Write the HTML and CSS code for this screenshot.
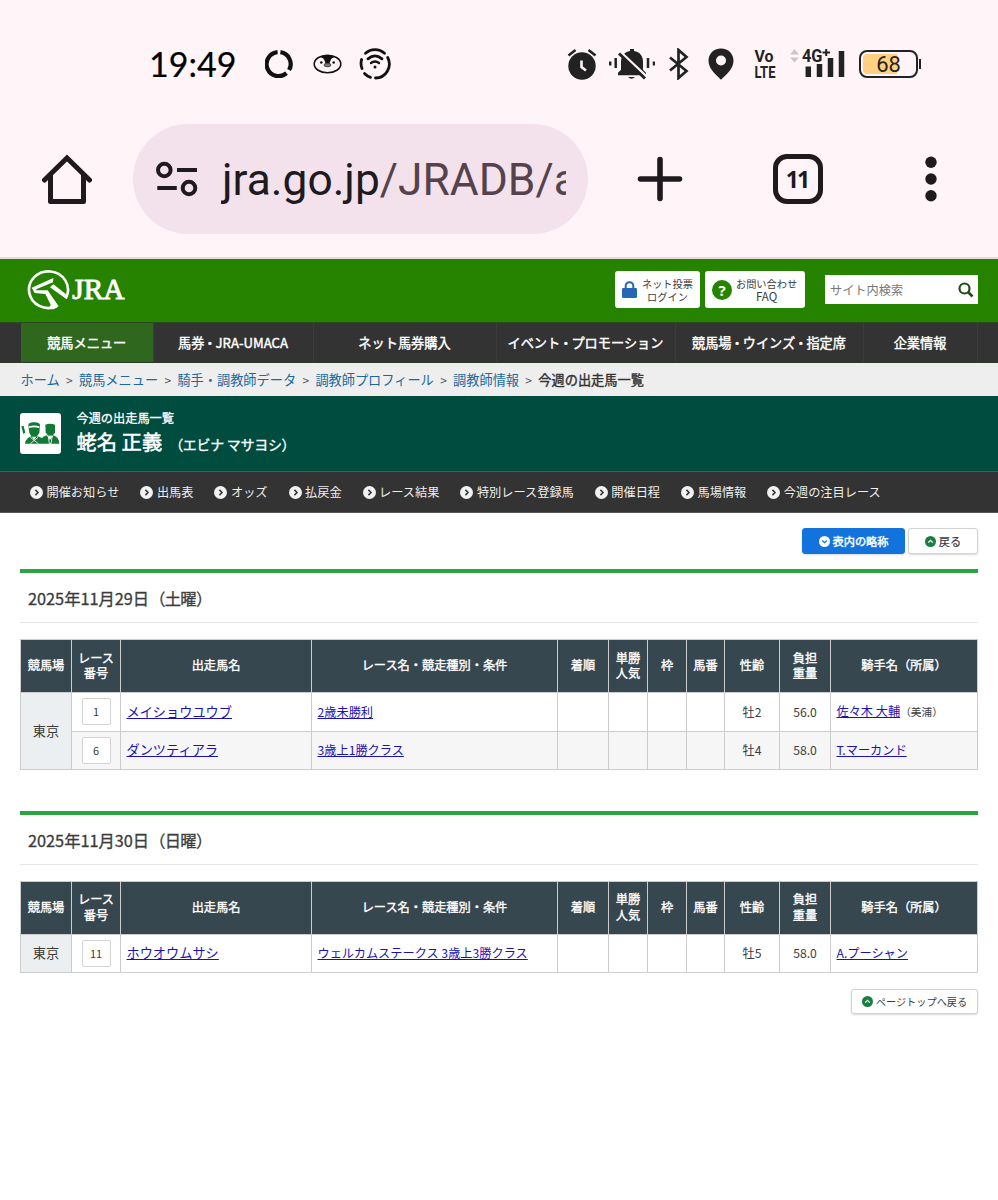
FILE: index.html
```
<!DOCTYPE html>
<html lang="ja">
<head>
    <meta charset="UTF-8">
    <meta name="viewport" content="width=device-width, initial-scale=1.0">
    <title>今週の出走馬一覧 JRA</title>
    <link rel="stylesheet" href="styles.css">
</head>
<body>
    <svg width="0" height="0" class="defs">
        <symbol id="arrow-right" viewBox="0 0 12 12"><circle cx="6" cy="6" r="6" fill="#f2f2f2"/><path d="M5 3.6 7.4 6 5 8.4" fill="none" stroke="#333" stroke-width="1.4"/></symbol>
        <symbol id="arrow-up" viewBox="0 0 12 12"><circle cx="6" cy="6" r="6" fill="#178040"/><path d="M3.5 7.2 6 4.8l2.5 2.4" fill="none" stroke="#fff" stroke-width="1.4"/></symbol>
        <symbol id="arrow-down" viewBox="0 0 12 12"><circle cx="6" cy="6" r="6" fill="#fff"/><path d="M3.5 4.9 6 7.2l2.5-2.3" fill="none" stroke="#1273dc" stroke-width="1.4"/></symbol>
    </svg>

    <div class="phone">
        <div class="status">
            <span class="time">19:49</span>
            <svg class="st-ring" width="28" height="28" viewBox="0 0 28 28"><g fill="none" stroke="#111" stroke-width="4.2"><path d="M12.6 2.2A12 12 0 1 0 21.5 23.2"/><path d="M15.4 2.2A12 12 0 0 1 24.1 20"/></g></svg>
            <svg class="st-penguin" width="29" height="20" viewBox="0 0 29 20"><ellipse cx="14.5" cy="10" rx="13.3" ry="8.8" fill="none" stroke="#111" stroke-width="1.6"/><path d="M7 3C10 .8 19 .8 22 3 18 4 17.500 6 16.500 9.500h-4C11.500 6 11 4 7 3z" fill="#111"/><circle cx="8.300" cy="8.500" r="1.300" fill="#111"/><circle cx="20.700" cy="8.500" r="1.300" fill="#111"/><ellipse cx="14.500" cy="11" rx="3.500" ry="1.800" fill="#777" stroke="#222" stroke-width=".7"/></svg>
            <svg class="st-wifi" width="32" height="32" viewBox="0 0 32 32"><g fill="none" stroke="#111" stroke-width="2.800" stroke-linecap="round"><path d="M6.500 5.300A14 14 0 0 1 25.500 5.300"/><path d="M2.600 11.500A14 14 0 0 0 3 20.500"/><path d="M5.500 25.500A14 14 0 0 0 11.500 29.300"/><path d="M28.700 9.500A14 14 0 0 1 16.500 30"/><path d="M9 10.800Q16 5 23 10.800"/><path d="M12 15Q16 12 20 15" stroke-width="2.400"/></g><circle cx="16" cy="19" r="1.500" fill="#111"/></svg>
            <div class="status-right">
                <svg width="30" height="32" viewBox="0 0 30 32"><circle cx="15" cy="18" r="13.700" fill="#222"/><path d="M1.500 7.500 8.500 2M28.500 7.500 21.500 2" stroke="#222" stroke-width="2.600"/><path d="M14.500 12.500v6.500l4.500 3.500" fill="none" stroke="#fff5f9" stroke-width="2.600"/></svg>
                <svg class="st-bell" width="46" height="32" viewBox="0 0 46 32"><path d="M9 27.300v-2.600l3-3V14c0-6 3.500-10 9-11V1h4v2c6 1 9 5 9 11v7.700l3 3v2.600z" fill="#222"/><path d="M19 29h7q-3.500 3.500-7 0z" fill="#222"/><path d="M12.500 5 37.500 28.500" stroke="#fff5f9" stroke-width="2.500"/><path d="M10 5.500 36 30.500" stroke="#222" stroke-width="3"/><path d="M1.200 13.500v4M6.700 10v10M39 10v10M45 13.500v4" stroke="#222" stroke-width="2.500"/></svg>
                <svg class="st-bt" width="20" height="32" viewBox="0 0 20 32"><path d="M1 9.500 17.500 23 9.500 30V2l8 7L1 22.500" fill="none" stroke="#222" stroke-width="2.700"/></svg>
                <svg class="st-pin" width="26" height="32" viewBox="0 0 26 32"><path d="M13 .5C5.500.5.500 6 .500 12.800.500 20 6 25 13 31.700 20 25 25.500 20 25.500 12.800 25.500 6 20.500.500 13 .500z" fill="#222"/><circle cx="13" cy="12.500" r="5" fill="#fff5f9"/></svg>
                <svg class="volte" width="22" height="36" viewBox="0 0 22 36"><text x="0.500" y="16" textLength="19" lengthAdjust="spacingAndGlyphs">Vo</text><text x="0.500" y="32" textLength="21" lengthAdjust="spacingAndGlyphs">LTE</text></svg>
                <svg class="st-signal" width="55" height="32" viewBox="0 0 55 32"><path d="M0 6.500 4.500 1 9 6.500zM0 9.500 4.500 14.500 9 9.500z" fill="#ccc5c9"/><path d="M18.300 18.500v10.500M29.500 16v13M40.500 10v19M51.500 3v26" stroke="#222" stroke-width="5.500"/><text x="12" y="14" textLength="20.500" lengthAdjust="spacingAndGlyphs" class="sig-text">4G</text><path d="M32.500 4.500h7.500M36.200 1v7" stroke="#222" stroke-width="2"/></svg>
                <div class="battery"><span>68</span></div>
            </div>
        </div>
        <div class="toolbar">
            <svg class="tb-home" width="50" height="52" viewBox="0 0 50 52"><path d="M2.500 27 25 5 47.500 27" fill="none" stroke="#201a1f" stroke-width="5" stroke-linecap="round"/><path d="M8.500 22v26.500h33V22" fill="none" stroke="#201a1f" stroke-width="5" stroke-linejoin="round"/></svg>
            <div class="urlbar">
                <svg width="42" height="36" viewBox="0 0 42 36"><g fill="none" stroke="#201a1f" stroke-width="4"><circle cx="8.300" cy="9" r="6.300"/><circle cx="33" cy="27" r="6.300"/><path d="M21 9h20M1.300 27h19.500"/></g></svg>
                <div class="url">jra.go.jp<span>/JRADB/a</span></div>
            </div>
            <svg class="tb-plus" width="46" height="46" viewBox="0 0 46 46"><path d="M3.500 23h39M23 3.500v39" stroke="#201a1f" stroke-width="5.600" stroke-linecap="round"/></svg>
            <div class="tabs">11</div>
            <svg class="tb-menu" width="12" height="46" viewBox="0 0 12 46"><g fill="#201a1f"><circle cx="6" cy="6.300" r="5.700"/><circle cx="6" cy="23" r="5.700"/><circle cx="6" cy="39.700" r="5.700"/></g></svg>
        </div>
    </div>

    <header class="header">
        <svg class="logo" width="100" height="42" viewBox="78 41 300 126">
            <path d="M200 123A58.500 55 0 1 0 170 153" fill="none" stroke="#fff" stroke-width="8"/>
            <path d="M95 97 160 68 159 81 112 100 106 105H143L176 153 160 162 147 160 152 148 136 116 104 113z" fill="#fff"/>
            <path d="M150 96 160 87 205 122 200 132z" fill="#fff"/>
            <text x="217" y="132" textLength="156" lengthAdjust="spacingAndGlyphs">JRA</text>
        </svg>
        <a class="hbtn login" href="#">
            <svg width="15" height="17" viewBox="0 0 15 17"><path d="M3.700 8V5a3.800 3.800 0 0 1 7.600 0v3" fill="none" stroke="#2468b5" stroke-width="2"/><rect width="15" height="10" y="7" rx="1.300" fill="#2468b5"/></svg>
            <span>ネット投票<br>ログイン</span>
        </a>
        <a class="hbtn faq" href="#">
            <b class="q">?</b>
            <span>お問い合わせ<br><i>FAQ</i></span>
        </a>
        <div class="search">サイト内検索
            <svg width="16" height="16" viewBox="0 0 16 16"><circle cx="6.500" cy="6.500" r="5" fill="none" stroke="#1f4d14" stroke-width="2.200"/><path d="m10 10 4.500 4.500" stroke="#1f4d14" stroke-width="2.600"/></svg>
        </div>
    </header>

    <nav class="gnav">
        <a class="current" href="#">競馬メニュー</a>
        <a href="#">馬券<em>・</em>JRA-UMACA</a>
        <a href="#">ネット馬券購入</a>
        <a href="#">イベント<em>・</em>プロモーション</a>
        <a href="#">競馬場<em>・</em>ウインズ<em>・</em>指定席</a>
        <a href="#">企業情報</a>
    </nav>

    <div class="crumbs">
        <a href="#">ホーム</a><i>&gt;</i><a href="#">競馬メニュー</a><i>&gt;</i><a href="#">騎手・調教師データ</a><i>&gt;</i><a href="#">調教師プロフィール</a><i>&gt;</i><a href="#">調教師情報</a><i>&gt;</i><strong>今週の出走馬一覧</strong>
    </div>

    <div class="title">
        <svg width="41" height="41" viewBox="0 0 123 123">
            <rect width="123" height="123" rx="9" fill="#fff"/>
            <g fill="#107a35">
                <path d="M4 40l7-1 5 20-6 4z"/>
                <path d="M25 36Q27 27 42 28 58 27 60 36L58 60 50 71H35L28 60z"/>
                <path d="M15 92Q17 75 35 70L42 81 50 70Q60 72 66 75 70 70 80 67L90 81 100 67Q117 73 118 92z"/>
                <path d="M76 35Q90 29 105 35V58L97 70H85L77 58z"/>
            </g>
            <path d="M27 43Q42 37 58 43" stroke="#fff" stroke-width="5" fill="none"/>
            <path d="M31 73 55 92M54 73 31 92M85 69 97 69 93 92H88z" stroke="#fff" stroke-width="2.500" fill="none"/>
        </svg>
        <div>
            <p>今週の出走馬一覧</p>
            <h1>蛯名 正義<span>（エビナ マサヨシ）</span></h1>
        </div>
    </div>

    <nav class="subnav">
        <a href="#"><svg><use href="#arrow-right"/></svg>開催お知らせ</a>
        <a href="#"><svg><use href="#arrow-right"/></svg>出馬表</a>
        <a href="#"><svg><use href="#arrow-right"/></svg>オッズ</a>
        <a href="#"><svg><use href="#arrow-right"/></svg>払戻金</a>
        <a href="#"><svg><use href="#arrow-right"/></svg>レース結果</a>
        <a href="#"><svg><use href="#arrow-right"/></svg>特別レース登録馬</a>
        <a href="#"><svg><use href="#arrow-right"/></svg>開催日程</a>
        <a href="#"><svg><use href="#arrow-right"/></svg>馬場情報</a>
        <a href="#"><svg><use href="#arrow-right"/></svg>今週の注目レース</a>
    </nav>

    <main>
        <div class="buttons">
            <a class="btn blue" href="#"><svg><use href="#arrow-down"/></svg>表内の略称</a>
            <a class="btn back" href="#"><svg><use href="#arrow-up"/></svg>戻る</a>
        </div>

        <section>
            <h2>2025年11月29日<span>（土曜）</span></h2>
            <table>
                <colgroup><col class="c1"><col class="c2"><col class="c3"><col class="c4"><col class="c5"><col class="c6"><col class="c7"><col class="c8"><col class="c9"><col class="c10"><col class="c11"></colgroup>
                <thead>
                    <tr><th>競馬場</th><th>レース<br>番号</th><th>出走馬名</th><th>レース名・競走種別・条件</th><th>着順</th><th>単勝<br>人気</th><th>枠</th><th>馬番</th><th>性齢</th><th>負担<br>重量</th><th>騎手名（所属）</th></tr>
                </thead>
                <tbody>
                    <tr><td class="place" rowspan="2">東京</td><td><span class="num">1</span></td><td class="horse"><a href="#">メイショウユウブ</a></td><td class="l"><a href="#">2歳未勝利</a></td><td></td><td></td><td></td><td></td><td>牡2</td><td>56.0</td><td class="l"><a href="#">佐々木 大輔</a><small>（美浦）</small></td></tr>
                    <tr class="even"><td><span class="num">6</span></td><td class="horse"><a href="#">ダンツティアラ</a></td><td class="l"><a href="#">3歳上1勝クラス</a></td><td></td><td></td><td></td><td></td><td>牡4</td><td>58.0</td><td class="l"><a href="#">T.マーカンド</a></td></tr>
                </tbody>
            </table>
        </section>

        <section>
            <h2>2025年11月30日<span>（日曜）</span></h2>
            <table>
                <colgroup><col class="c1"><col class="c2"><col class="c3"><col class="c4"><col class="c5"><col class="c6"><col class="c7"><col class="c8"><col class="c9"><col class="c10"><col class="c11"></colgroup>
                <thead>
                    <tr><th>競馬場</th><th>レース<br>番号</th><th>出走馬名</th><th>レース名・競走種別・条件</th><th>着順</th><th>単勝<br>人気</th><th>枠</th><th>馬番</th><th>性齢</th><th>負担<br>重量</th><th>騎手名（所属）</th></tr>
                </thead>
                <tbody>
                    <tr><td class="place">東京</td><td><span class="num">11</span></td><td class="horse"><a href="#">ホウオウムサシ</a></td><td class="l"><a href="#">ウェルカムステークス 3歳上3勝クラス</a></td><td></td><td></td><td></td><td></td><td>牡5</td><td>58.0</td><td class="l"><a href="#">A.プーシャン</a></td></tr>
                </tbody>
            </table>
        </section>

        <div class="pagetop">
            <a class="btn" href="#"><svg><use href="#arrow-up"/></svg>ページトップへ戻る</a>
        </div>
    </main>
</body>
</html>
```
FILE: styles.css
```
* {
    box-sizing: border-box;
}
body {
    margin: 0;
    width: 998px;
    height: 1200px;
    overflow: hidden;
    background: #fff;
    color: #3c3c3c;
    font-family: "Noto Sans CJK JP", sans-serif;
    font-size: 12.2px;
}
a {
    text-decoration: none;
    color: inherit;
}
svg {
    display: block;
    flex: none;
}
i, em {
    font-style: normal;
}
.defs {
    position: absolute;
}

/* phone and browser bars */
.phone {
    height: 259px;
    background: #fff5f9;
    border-bottom: 2px solid #e4dadb;
}
.status {
    display: flex;
    align-items: center;
    height: 124px;
    padding: 4px 77px 0 149px;
}
.time {
    width: 116px;
    font-family: Lato, sans-serif;
    font-size: 34px;
    line-height: 40px;
    color: #000;
    -webkit-text-stroke: 0.2px #000;
}
.st-penguin {
    margin-left: 20px;
}
.st-wifi {
    margin-left: 17px;
}
.status-right {
    display: flex;
    align-items: center;
    margin-left: auto;
}
.st-bell {
    margin-left: 12px;
}
.st-bt {
    margin-left: 14px;
}
.st-pin {
    margin-left: 19px;
}
.volte {
    margin-left: 20px;
    overflow: visible;
    font: bold 17px Roboto, sans-serif;
    fill: #222;
}
.st-signal {
    margin-left: 14px;
    overflow: visible;
}
.sig-text {
    font: bold 18px Roboto, sans-serif;
    fill: #222;
}
.battery {
    position: relative;
    width: 59px;
    height: 28px;
    margin: 0 3px 0 14px;
    border: 2px solid #222;
    border-radius: 8px;
    background: linear-gradient(90deg, #ffd182 66%, transparent 66%) content-box;
    padding: 2px;
    font: 22px/21px Roboto, sans-serif;
    color: #2a2118;
    text-align: center;
}
.battery::after {
    content: "";
    position: absolute;
    right: -5px;
    top: 7px;
    width: 2px;
    height: 10px;
    background: #222;
}
.toolbar {
    display: flex;
    align-items: center;
    height: 110px;
    padding-left: 42px;
}
.urlbar {
    display: flex;
    align-items: center;
    width: 455px;
    height: 110px;
    margin-left: 41px;
    padding-left: 23px;
    border-radius: 55px;
    background: #f3e2eb;
}
.url {
    width: 345px;
    margin-left: 23px;
    padding: 2px 0 0 1px;
    overflow: hidden;
    white-space: nowrap;
    font: 44.3px/60px Roboto, sans-serif;
    color: #201a1f;
}
.url span {
    color: #55424d;
}
.tb-plus {
    margin-left: 49px;
}
.tabs {
    width: 50px;
    height: 50px;
    margin-left: 90px;
    border: 5px solid #201a1f;
    border-radius: 14px;
    font: bold 23px/41px "Noto Sans", sans-serif;
    letter-spacing: -2px;
    text-indent: -2px;
    text-align: center;
    color: #201a1f;
}
.tb-menu {
    margin-left: 102px;
}

/* site header */
.header {
    display: flex;
    align-items: center;
    height: 63px;
    padding: 0 20px 2px 26px;
    background: #268300;
}
.logo {
    margin-right: auto;
}
.logo text {
    font-family: "Liberation Serif", serif;
    font-size: 88px;
    fill: #fff;
    stroke: #fff;
    stroke-width: 3px;
}
.hbtn {
    display: flex;
    align-items: center;
    height: 37px;
    border-radius: 3px;
    background: #fff;
    font-size: 10.2px;
    line-height: 13px;
    text-align: center;
}
.login {
    width: 85px;
    padding-left: 7px;
    gap: 5px;
}
.faq {
    width: 100px;
    margin: 0 20px 0 5px;
    padding-left: 7px;
    gap: 4px;
}
.faq i {
    font-size: 11.5px;
}
.q {
    width: 20px;
    height: 20px;
    border-radius: 50%;
    background: #268300;
    color: #fff;
    font: bold 15px/20px "Noto Sans", sans-serif;
}
.search {
    display: flex;
    align-items: center;
    justify-content: space-between;
    width: 153px;
    height: 29px;
    padding: 0 4px 0 5px;
    background: #fff;
    color: #777;
}
.gnav {
    display: flex;
    height: 41px;
    padding-left: 21px;
    background: #333;
    border-top: 1px solid #2c4a20;
    border-bottom: 1px solid #2b3a2b;
    color: #fff;
    font-size: 13.2px;
    line-height: 39px;
    text-align: center;
    -webkit-text-stroke: 0.4px #fff;
}
.gnav a {
    width: 160px;
    border-right: 1px solid #3b3b3b;
}
.gnav a:nth-child(1) { width: 132.5px; }
.gnav a:nth-child(3) { width: 183px; }
.gnav a:nth-child(4) { width: 179px; }
.gnav a:nth-child(5) { width: 188px; }
.gnav a:nth-child(6) { width: 114px; }
.gnav .current {
    background: #30671e;
}
.gnav em {
    margin: 0 -1px;
}
.crumbs {
    display: flex;
    height: 33px;
    padding-left: 20.5px;
    background: #eee;
    font-size: 13.2px;
    line-height: 33px;
    color: #17699f;
}
.crumbs i {
    width: 19.3px;
    font-size: 12px;
    color: #555;
    text-align: center;
}
.crumbs strong {
    font-weight: normal;
    color: #333;
    -webkit-text-stroke: 0.4px #333;
}
.title {
    display: flex;
    align-items: center;
    gap: 15.5px;
    height: 75px;
    padding: 0 0 0 20px;
    background: #004c3f;
    color: #fff;
    -webkit-text-stroke: 0.3px #fff;
}
.title p {
    margin: 1px 0 0;
    line-height: 18px;
}
.title h1 {
    margin: 0;
    font-size: 20.3px;
    font-weight: normal;
    line-height: 29px;
    -webkit-text-stroke: 0.5px #fff;
}
.title h1 span {
    margin-left: 7px;
    font-size: 14px;
    letter-spacing: -0.3px;
    -webkit-text-stroke: 0.3px #fff;
}
.subnav {
    display: flex;
    gap: 21px;
    height: 42px;
    padding-left: 30px;
    background: #333;
    border-top: 1px solid #555;
    border-bottom: 1px solid #555;
    color: #eee;
    line-height: 41px;
}
.subnav a {
    display: flex;
    align-items: center;
    gap: 3.5px;
}
.subnav svg {
    width: 13px;
    height: 13px;
}

/* contents */
main {
    padding: 15px 20px 0 20px;
}
.buttons {
    display: flex;
    justify-content: flex-end;
    gap: 3px;
    height: 41px;
}
.btn {
    display: flex;
    align-items: center;
    justify-content: center;
    gap: 3px;
    width: 127px;
    height: 25px;
    border: 1px solid #d2d2d2;
    border-radius: 3px;
    background: #fff;
    box-shadow: 0 1px 2px rgba(0, 0, 0, 0.15);
    font-size: 10.2px;
}
.btn svg {
    width: 11px;
    height: 11px;
}
.blue, .back {
    height: 26px;
    font-size: 11.2px;
}
.blue {
    width: 103px;
    border-color: #1273dc;
    background: #1273dc;
    color: #fff;
    -webkit-text-stroke: 0.4px #fff;
}
.back {
    width: 70px;
    -webkit-text-stroke: 0.2px #333;
}
section {
    height: 241.5px;
    border-top: 4px solid #2aa53f;
}
section + section {
    height: 178px;
}
h2 {
    margin: 0 0 16px;
    padding-left: 8px;
    height: 50px;
    border-bottom: 1px solid #e8e8e8;
    font-size: 16.3px;
    font-weight: normal;
    line-height: 50px;
    -webkit-text-stroke: 0.3px #3c3c3c;
}
h2 span {
    letter-spacing: -0.7px;
}
table {
    width: 958px;
    table-layout: fixed;
    border-collapse: collapse;
}
.c1, .c5, .c10 { width: 51px; }
.c2 { width: 49px; }
.c3 { width: 191px; }
.c4 { width: 246px; }
.c6, .c7 { width: 39px; }
.c8 { width: 38px; }
.c9 { width: 55px; }
.c11 { width: 147px; }
th, td {
    padding: 0;
    border: 1px solid #ccc;
    text-align: center;
    font-weight: normal;
}
th {
    height: 53px;
    background: #37474f;
    color: #fff;
    line-height: 15.5px;
    -webkit-text-stroke: 0.35px #fff;
}
td {
    height: 38.5px;
    line-height: 18px;
}
td a {
    color: #1a12b8;
    text-decoration: underline;
}
.place {
    background: #eceff1;
    font-size: 13.2px;
}
.horse, .l {
    padding-left: 5.5px;
    text-align: left;
}
.horse {
    font-size: 13.2px;
}
.even td:not(.place) {
    background: #f6f6f6;
}
.num {
    display: block;
    width: 29px;
    height: 27px;
    margin: 0 auto;
    border: 1px solid #d4d4d4;
    border-radius: 2px;
    background: #fff;
    font-size: 11px;
    line-height: 25px;
}
small {
    font-size: 10.7px;
}
.pagetop {
    display: flex;
    justify-content: flex-end;
}
```
